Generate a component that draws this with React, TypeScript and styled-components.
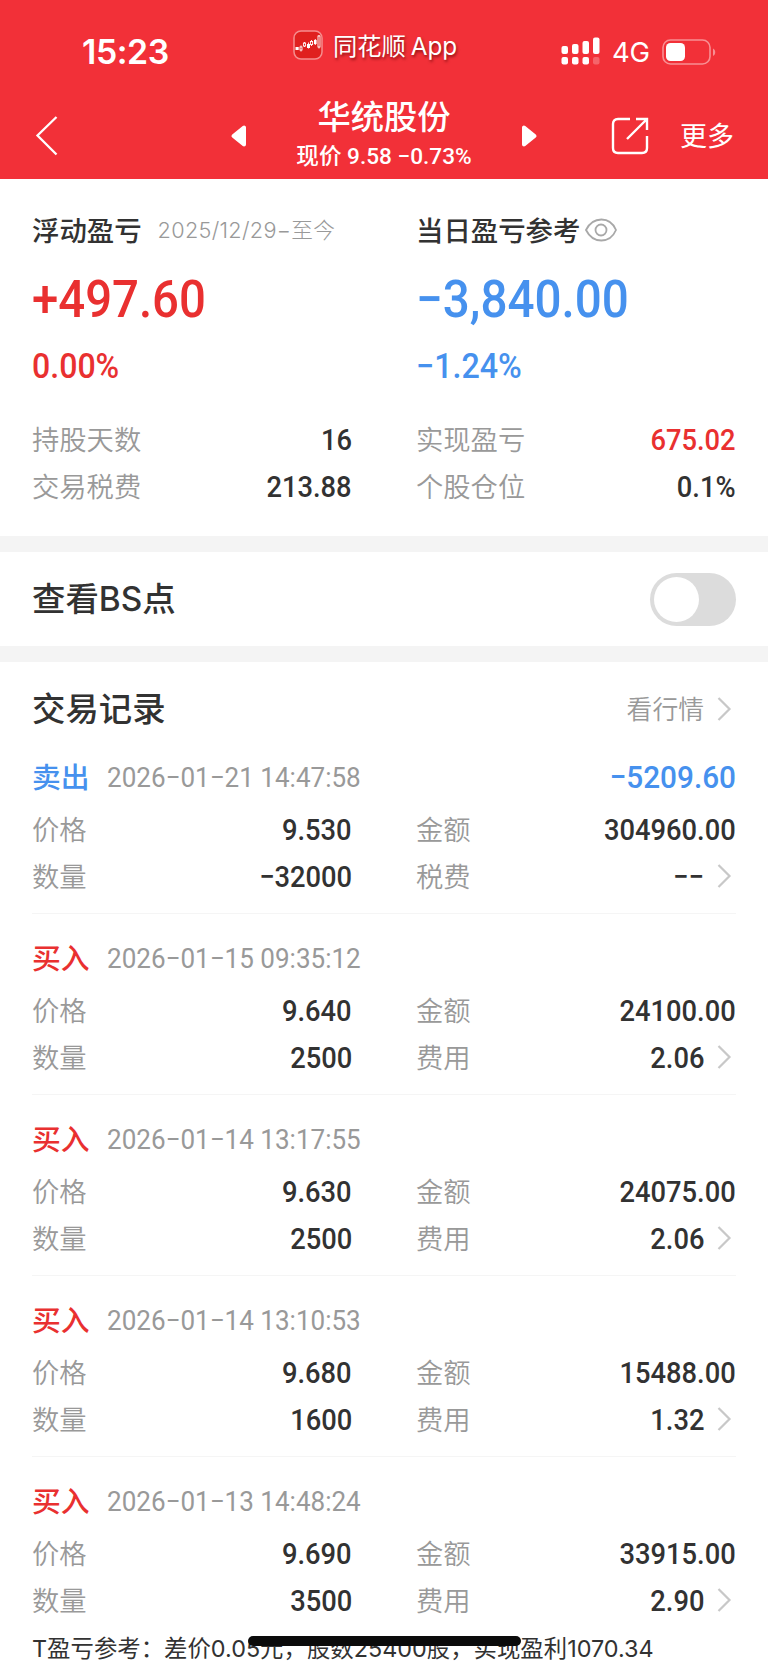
import React from 'react';
import styled, { createGlobalStyle } from 'styled-components';

const RED = '#e93030';
const BLUE = '#4691ee';
const INK = '#323232';
const GRAY = '#999999';

const Global = createGlobalStyle`
  * { box-sizing: border-box; }
  body {
    margin: 0;
    background: #fff;
    font-family: Inter, 'Noto Sans CJK SC', sans-serif;
    color: ${INK};
  }
`;

const Screen = styled.div`
  position: relative;
  width: 768px;
  height: 1663px;
  overflow: hidden;
  background: #fff;
`;

const Header = styled.header`
  height: 179px;
  background: #f23038;
  color: #fff;
`;

const StatusBar = styled.div`
  display: flex;
  align-items: center;
  height: 90px;
  padding: 13px 0 0 82px;
`;

const Clock = styled.div`
  width: 211px;
  font-size: 33.8px;
  font-weight: 600;
  line-height: 40px;
  letter-spacing: -0.4px;
`;

const AppReturn = styled.div`
  display: flex;
  align-items: center;
  gap: 10px;
  width: 268px;
  margin-top: -14px;
  font-size: 24.3px;
  line-height: 32px;
  word-spacing: -2px;
  text-shadow: 1px 2px 3px rgba(90, 0, 0, 0.65);
  white-space: nowrap;

  span {
    padding-top: 2px;
  }
`;

const Network = styled.div`
  box-sizing: content-box;
  width: 38px;
  padding-left: 11px;
  font-size: 27.5px;
  line-height: 32px;
  letter-spacing: -0.3px;
`;

const Battery = styled.svg`
  margin-left: 11px;
`;

const NavBar = styled.nav`
  display: flex;
  align-items: center;
  height: 89px;
  padding: 2px 0 0 35px;
`;

const Back = styled.svg`
  margin-right: 171px;
`;

const TitleBlock = styled.div`
  display: flex;
  flex-direction: column;
  align-items: center;
  width: 274px;
  padding-top: 4px;
`;

const StockName = styled.h1`
  margin: 0;
  font-size: 33.3px;
  font-weight: 500;
  line-height: 38px;
`;

const StockPrice = styled.div`
  font-family: Roboto, 'Noto Sans CJK SC', sans-serif;
  font-size: 22.6px;
  font-weight: 500;
  line-height: 41px;
  white-space: nowrap;
`;

const Share = styled.svg`
  margin-left: 73px;
`;

const More = styled.span`
  margin-left: 31px;
  padding-top: 3px;
  font-size: 27px;
  line-height: 36px;
`;

const Summary = styled.section`
  display: grid;
  grid-template-columns: 320px 320px;
  column-gap: 64px;
  height: 357px;
  padding: 30px 32px 0;
`;

const Metric = styled.div`
  display: flex;
  flex-direction: column;
`;

const MetricHead = styled.div`
  display: flex;
  align-items: center;
  height: 40px;
  white-space: nowrap;
`;

const MetricName = styled.span`
  font-size: 27.4px;
  font-weight: 500;
`;

const Period = styled.span`
  margin: -2px 0 0 16px;
  font-size: 21.7px;
  font-weight: 300;
  letter-spacing: 0.3px;
  color: ${GRAY};
`;

const EyeIcon = styled.svg`
  margin: 1px 0 0 3px;
`;

const Num = styled.span<{
  $size?: number;
  $color?: string;
  $weight?: number;
  $left?: boolean;
  $stretch?: number;
}>`
  display: inline-block;
  font-family: Roboto, sans-serif;
  font-size: ${(p) => p.$size ?? 30}px;
  font-weight: ${(p) => p.$weight ?? 500};
  color: ${(p) => p.$color ?? INK};
  white-space: nowrap;
  transform: scaleX(${(p) => p.$stretch ?? 0.91});
  transform-origin: ${(p) => (p.$left ? 'left' : 'right')} center;
`;

const Headline = styled.div`
  height: 60px;
  margin-top: 21px;
  line-height: 60px;
`;

const Percent = styled.div`
  height: 40px;
  margin-top: 16px;
  line-height: 40px;
`;

const Facts = styled.div`
  margin-top: 30px;
`;

const Row = styled.div`
  display: flex;
  align-items: center;
  height: 46.7px;
`;

const Label = styled.span`
  flex: 1;
  margin-top: -2px;
  font-size: 27.3px;
  font-weight: 350;
  color: ${GRAY};
`;

const ToggleSection = styled.section`
  display: flex;
  align-items: center;
  justify-content: space-between;
  height: 126px;
  padding: 0 32px;
  border: solid #f4f4f4;
  border-width: 16px 0;
`;

const SectionTitle = styled.h2`
  margin: 0;
  font-size: 33.4px;
  font-weight: 500;
  line-height: 44px;
`;

const Switch = styled.div`
  width: 86px;
  height: 53px;
  padding: 4px;
  border-radius: 27px;
  background: #dcdcdc;
`;

const Knob = styled.div`
  width: 45px;
  height: 45px;
  border-radius: 50%;
  background: #fff;
`;

const Records = styled.section`
  padding: 0 32px;
`;

const RecordsHead = styled.div`
  display: flex;
  align-items: center;
  justify-content: space-between;
  height: 94px;
`;

const QuoteLink = styled.span`
  display: flex;
  align-items: center;
  font-size: 25.8px;
  font-weight: 350;
  color: ${GRAY};

  span {
    margin-top: -3px;
  }
`;

const Record = styled.article`
  height: 181px;
  padding-top: 24px;
  border-bottom: 1px solid #f5f5f5;

  &:first-of-type {
    height: 158px;
    padding-top: 1px;
  }

  &:last-of-type {
    height: 180px;
    border: 0;
  }
`;

const RecordHead = styled.div`
  display: flex;
  align-items: center;
  height: 40px;
  margin-bottom: 9px;
`;

const Side = styled.span<{ $color: string }>`
  width: 75px;
  margin-top: -4px;
  font-size: 28.8px;
  font-weight: 500;
  color: ${(p) => p.$color};
`;

const Time = styled.div`
  flex: 1;
`;

const Pair = styled.div`
  display: grid;
  grid-template-columns: 320px 320px;
  column-gap: 64px;
`;

const Footnote = styled.div`
  margin-top: -5px;
  padding-left: 32px;
  font-size: 23.4px;
  line-height: 34px;
  white-space: nowrap;
`;

const HomeIndicator = styled.div`
  position: absolute;
  left: 248px;
  top: 1636px;
  width: 273px;
  height: 10px;
  border-radius: 5px;
  background: #0b0b0b;
`;

const ChevronIcon = styled.svg`
  margin: 0 4px 0 12px;
`;

const Chevron = () => (
  <ChevronIcon width="16" height="26" viewBox="0 0 16 26" fill="none">
    <path d="M2.5 2 13.5 13 2.5 24" stroke="#c8c8c8" strokeWidth="2.2" />
  </ChevronIcon>
);

const Signal = () => (
  <svg width="40" height="30" viewBox="0 0 40 30" fill="#fff">
    <rect x="0.5" y="9" width="6.5" height="8" rx="2" />
    <rect x="11" y="7" width="6.5" height="10" rx="2" />
    <rect x="21.5" y="4" width="6.5" height="13" rx="2" />
    <rect x="32" y="0.5" width="6.5" height="16.5" rx="2" />
    <rect x="0.5" y="20" width="6.5" height="7.5" rx="2" />
    <rect x="11" y="20" width="6.5" height="7.5" rx="2" />
    <rect x="21.5" y="20" width="6.5" height="7.5" rx="2" />
    <rect x="32" y="20" width="6.5" height="7.5" rx="2" opacity="0.25" />
  </svg>
);

const AppLogo = () => (
  <svg width="30" height="30" viewBox="0 0 30 30" fill="none">
    <rect x="1" y="1" width="28" height="28" rx="7" fill="#e0201f" stroke="#f58d8e" strokeWidth="1.5" />
    <g fill="#fff">
      <rect x="2.5" y="17" width="3.2" height="3" />
      <rect x="14" y="14" width="3" height="4" />
      <rect x="21" y="10" width="2.6" height="4" />
    </g>
    <g stroke="#fff" strokeWidth="0.9">
      <rect x="7" y="17" width="2" height="3" />
      <path d="M8 15.5V17M8 20v1.5M11.5 12v1.5M11.5 16v1M15.5 12.5v6M18.5 10v1.5M18.5 14.5V16M22.3 9v6M26 5v1M26 17v1.5" />
      <rect x="10.4" y="13" width="2.2" height="3" />
      <rect x="17.4" y="11.5" width="2.2" height="3" />
      <rect x="25" y="6" width="2" height="11" />
    </g>
  </svg>
);

const TitleArrow = ({ left }: { left?: boolean }) => (
  <svg width="17" height="24" viewBox="0 0 17 24" fill="#fff" stroke="#fff" strokeWidth="4" strokeLinejoin="round">
    <path d={left ? 'M14 3.5V20.5L3.5 12Z' : 'M3 3.5V20.5L13.5 12Z'} />
  </svg>
);

const facts = [
  [
    { label: '持股天数', value: '16' },
    { label: '交易税费', value: '213.88' },
  ],
  [
    { label: '实现盈亏', value: '675.02', color: RED },
    { label: '个股仓位', value: '0.1%' },
  ],
];

const FactList = ({ items }: { items: { label: string; value: string; color?: string }[] }) => (
  <Facts>
    {items.map((f) => (
      <Row key={f.label}>
        <Label>{f.label}</Label>
        <Num $color={f.color}>{f.value}</Num>
      </Row>
    ))}
  </Facts>
);

const records = [
  { side: '卖出', time: '2026−01−21 14:47:58', price: '9.530', qty: '−32000', amount: '304960.00', feeLabel: '税费', fee: '−−', profit: '−5209.60' },
  { side: '买入', time: '2026−01−15 09:35:12', price: '9.640', qty: '2500', amount: '24100.00', feeLabel: '费用', fee: '2.06' },
  { side: '买入', time: '2026−01−14 13:17:55', price: '9.630', qty: '2500', amount: '24075.00', feeLabel: '费用', fee: '2.06' },
  { side: '买入', time: '2026−01−14 13:10:53', price: '9.680', qty: '1600', amount: '15488.00', feeLabel: '费用', fee: '1.32' },
  { side: '买入', time: '2026−01−13 14:48:24', price: '9.690', qty: '3500', amount: '33915.00', feeLabel: '费用', fee: '2.90' },
];

export default function App() {
  return (
    <Screen>
      <Global />
      <Header>
        <StatusBar>
          <Clock>15:23</Clock>
          <AppReturn>
            <AppLogo />
            <span>同花顺 App</span>
          </AppReturn>
          <Signal />
          <Network>4G</Network>
          <Battery width="56" height="28" viewBox="0 0 56 28" fill="none">
            <rect x="2" y="2" width="47" height="24" rx="7.5" stroke="#f88f93" strokeWidth="1.6" />
            <rect x="5" y="5" width="19" height="18" rx="4.5" fill="#fff" />
            <path d="M52 10.5c3 1.5 3 6 0 7.5z" fill="#f88f93" />
          </Battery>
        </StatusBar>
        <NavBar>
          <Back width="24" height="42" viewBox="0 0 24 42" fill="none">
            <path d="M21.5 2 2.5 20.5 21.5 39.5" stroke="#fff" strokeWidth="2.3" />
          </Back>
          <TitleArrow left />
          <TitleBlock>
            <StockName>华统股份</StockName>
            <StockPrice>现价 9.58 −0.73%</StockPrice>
          </TitleBlock>
          <TitleArrow />
          <Share width="38" height="38" viewBox="0 0 38 38" fill="none" stroke="#fff" strokeWidth="2.4">
            <path d="M19 2H7Q2 2 2 7V31Q2 36 7 36H31Q36 36 36 31V19M25 2H36V13M36 2 16 22" />
          </Share>
          <More>更多</More>
        </NavBar>
      </Header>

      <Summary>
        <Metric>
          <MetricHead>
            <MetricName>浮动盈亏</MetricName>
            <Period>2025/12/29−至今</Period>
          </MetricHead>
          <Headline>
            <Num $left $size={52} $color={RED}>+497.60</Num>
          </Headline>
          <Percent>
            <Num $left $size={34.5} $color={RED} $stretch={0.93}>0.00%</Num>
          </Percent>
          <FactList items={facts[0]} />
        </Metric>
        <Metric>
          <MetricHead>
            <MetricName>当日盈亏参考</MetricName>
            <EyeIcon width="36" height="26" viewBox="0 0 36 26" fill="none" stroke="#a8a8a8" strokeWidth="1.8">
              <path d="M3 13C10-1 27-1 33 13C27 27 10 27 3 13Z" />
              <circle cx="18" cy="13" r="5.5" />
            </EyeIcon>
          </MetricHead>
          <Headline>
            <Num $left $size={52} $color={BLUE} $stretch={0.915}>−3,840.00</Num>
          </Headline>
          <Percent>
            <Num $left $size={34.5} $color={BLUE} $stretch={0.935}>−1.24%</Num>
          </Percent>
          <FactList items={facts[1]} />
        </Metric>
      </Summary>

      <ToggleSection>
        <SectionTitle>查看BS点</SectionTitle>
        <Switch>
          <Knob />
        </Switch>
      </ToggleSection>

      <Records>
        <RecordsHead>
          <SectionTitle>交易记录</SectionTitle>
          <QuoteLink>
            <span>看行情</span>
            <Chevron />
          </QuoteLink>
        </RecordsHead>
        {records.map((r) => (
          <Record key={r.time}>
            <RecordHead>
              <Side $color={r.profit ? BLUE : RED}>{r.side}</Side>
              <Time>
                <Num $left $size={28} $weight={400} $color={GRAY} $stretch={0.93}>{r.time}</Num>
              </Time>
              {r.profit && <Num $size={32} $color={BLUE} $stretch={0.93}>{r.profit}</Num>}
            </RecordHead>
            <Pair>
              <Row>
                <Label>价格</Label>
                <Num>{r.price}</Num>
              </Row>
              <Row>
                <Label>金额</Label>
                <Num>{r.amount}</Num>
              </Row>
              <Row>
                <Label>数量</Label>
                <Num>{r.qty}</Num>
              </Row>
              <Row>
                <Label>{r.feeLabel}</Label>
                <Num>{r.fee}</Num>
                <Chevron />
              </Row>
            </Pair>
          </Record>
        ))}
      </Records>
      <Footnote>T盈亏参考：差价0.05元，股数25400股，实现盈利1070.34</Footnote>
      <HomeIndicator />
    </Screen>
  );
}
